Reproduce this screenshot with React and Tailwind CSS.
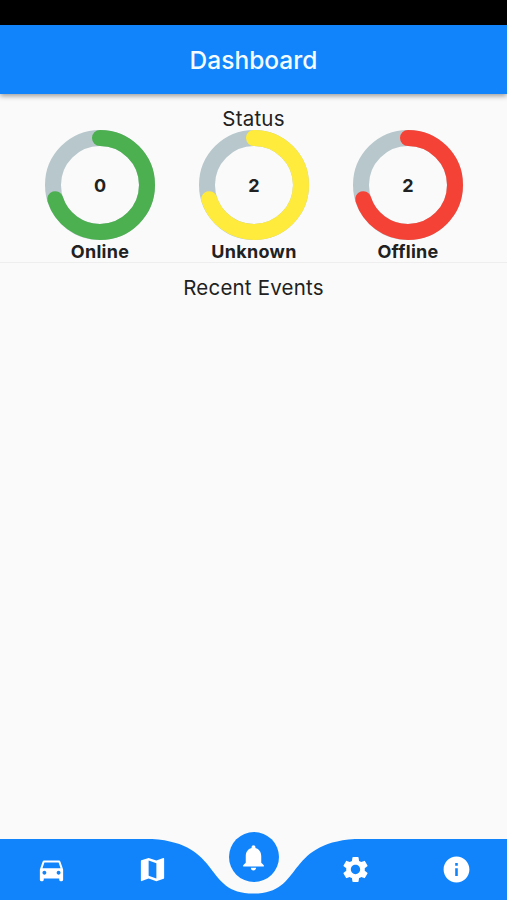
import { MdDirectionsCar, MdMap, MdNotifications, MdSettings, MdInfo } from "react-icons/md";

const RADIUS = 47;
const CIRCUMFERENCE = 2 * Math.PI * RADIUS;

function StatusRing({ value, label, color }) {
  return (
    <div className="flex w-[110px] flex-col items-center">
      <div className="grid h-[110px] w-[110px] place-items-center">
        <svg viewBox="0 0 110 110" className="col-start-1 row-start-1 h-[110px] w-[110px] -rotate-90" fill="none" strokeWidth="16">
          <circle cx="55" cy="55" r={RADIUS} stroke="#b8c7cc" />
          <circle
            cx="55"
            cy="55"
            r={RADIUS}
            stroke={color}
            strokeLinecap="round"
            strokeDasharray={`${CIRCUMFERENCE * 0.7} ${CIRCUMFERENCE}`}
          />
        </svg>
        <span className="col-start-1 row-start-1 pt-px text-[18px] leading-none font-bold">{value}</span>
      </div>
      <span className="text-[18px] leading-[23px] font-bold tracking-[0.3px] whitespace-nowrap">{label}</span>
    </div>
  );
}

export default function App() {
  return (
    <div className="flex h-[900px] w-[507px] flex-col overflow-hidden bg-[#fafafa] font-['Inter',sans-serif] text-[#212121]">
      <div className="h-[25px] shrink-0 bg-black" />
      <header className="flex h-[69px] shrink-0 items-center justify-center bg-[#1184fc] pt-px shadow-[0_2px_5px_rgba(0,0,0,0.38)]">
        <h1 className="text-[24.5px] font-medium tracking-[0px] text-[#f4fcff]">Dashboard</h1>
      </header>

      <main className="flex flex-1 flex-col">
        <section className="flex h-[169px] flex-col border-b border-[#eeeeee] pt-[13px]">
          <h2 className="text-center text-[20.5px] leading-[23px] tracking-[0.2px]">Status</h2>
          <div className="flex justify-between pr-[44px] pl-[45px]">
            <StatusRing value="0" label="Online" color="#4caf50" />
            <StatusRing value="2" label="Unknown" color="#ffeb3b" />
            <StatusRing value="2" label="Offline" color="#f44336" />
          </div>
        </section>
        <h2 className="pt-[13px] text-center text-[20.5px] leading-[23px] tracking-[0.2px]">Recent Events</h2>
      </main>

      <nav className="relative h-[61px] shrink-0 text-white">
        <svg className="absolute inset-0 h-[61px] w-[507px]" viewBox="0 0 507 61" fill="#1184fc">
          <path d="M0 0H152.1C223.1 4.5 202.8 54.6 253.5 54.6C304.2 54.6 283.9 4.5 354.9 0H507V61H0Z" />
        </svg>
        <div className="relative grid h-full grid-cols-5 justify-items-center pt-[15px] pl-px">
          <MdDirectionsCar size={31} />
          <MdMap size={31} />
          <div className="-mt-[22px] flex h-[50px] w-[50px] items-center justify-center rounded-full bg-[#1184fc]">
            <MdNotifications size={31} />
          </div>
          <MdSettings size={31} />
          <MdInfo size={31} />
        </div>
      </nav>
    </div>
  );
}
